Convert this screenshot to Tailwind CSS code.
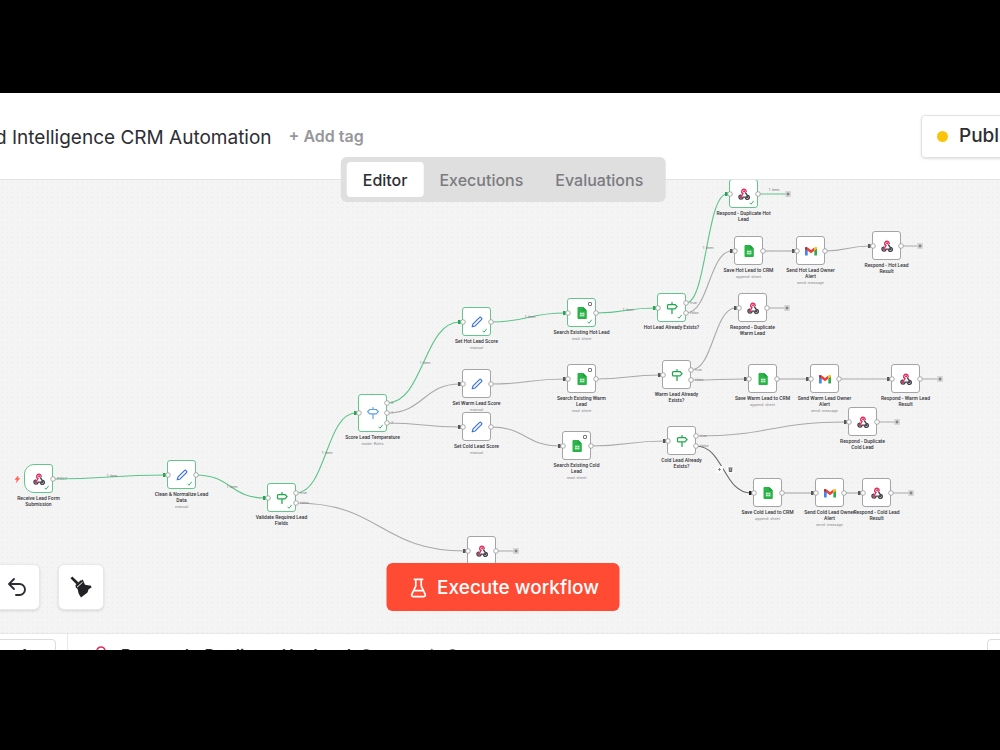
<!DOCTYPE html>
<html lang="en">
<head>
<meta charset="utf-8">
<meta name="viewport" content="width=device-width, initial-scale=1">
<title>Lead Intelligence CRM Automation</title>
<script src="https://cdn.jsdelivr.net/npm/@tailwindcss/browser@4"></script>
</head>
<body class="flex h-screen flex-col overflow-hidden bg-black pt-[93px] pb-[100px] font-['Inter',sans-serif] text-[#2d2e33]">

<!-- icon library -->
<svg class="hidden" aria-hidden="true">
  <symbol id="i-webhook" viewBox="0 0 20 20">
    <g fill="none" stroke-width="2.4" stroke-linecap="round">
      <path d="M12.6 8.2 15.4 12.4A3.3 3.3 0 1 1 12.4 16.5" stroke="#45444d"/>
      <path d="M14.4 15.2H8.4A3.4 3.4 0 1 1 4.2 11.8" stroke="#45444d"/>
      <path d="M5 15 8.2 9.3A3.8 3.8 0 1 1 13.7 5.8" stroke="#e0305f"/>
    </g>
    <circle cx="10.2" cy="5.6" r="1.9" fill="#e0305f"/><circle cx="5" cy="15.2" r="2" fill="#d13562"/><circle cx="15.3" cy="15.2" r="2" fill="#45444d"/>
  </symbol>
  <symbol id="i-pen" viewBox="0 0 20 20">
    <path d="M2 18 3.4 13 14 2.6a1.9 1.9 0 0 1 2.8 0l.7.7a1.9 1.9 0 0 1 0 2.8L7 16.600Z" fill="#f5f8ff" stroke="#3b6fd6" stroke-width="1.9" stroke-linejoin="round"/>
  </symbol>
  <symbol id="i-sign" viewBox="0 0 20 20">
    <path d="M10 1v3M10 11.500V19M4 4.200H15L18.500 7.800 15 11.400H4a1.500 1.500 0 0 1-1.500-1.500V5.700A1.500 1.500 0 0 1 4 4.200Z" fill="none" stroke="currentColor" stroke-width="2.100" stroke-linejoin="round" stroke-linecap="round"/>
  </symbol>
  <symbol id="i-switch" viewBox="0 0 20 20">
    <path d="M10 1v3M10 11.500V19M4.500 4.200H15.500L19 7.800 15.500 11.400H4.500L1 7.800Z" fill="none" stroke="currentColor" stroke-width="1.900" stroke-linejoin="round" stroke-linecap="round"/>
  </symbol>
  <symbol id="i-sheets" viewBox="0 0 20 20">
    <path d="M4 0H12l6 6v12.500a1.500 1.500 0 0 1-1.500 1.500H4A1.500 1.500 0 0 1 2.500 18.500v-17A1.500 1.500 0 0 1 4 0Z" fill="#28b446"/>
    <path d="M12 0l6 6h-6Z" fill="#219b3b"/><rect x="6.500" y="9.500" width="7.500" height="6" fill="#d9f5df"/><path d="M6.500 12.500h7.500M10.200 9.500v6" stroke="#28b446" stroke-width=".8"/>
  </symbol>
  <symbol id="i-gmail" viewBox="0 0 20 20">
    <path d="M0 5v11.700c0 .6.400 1 1 1h3.500V8.500Z" fill="#4285f4"/><path d="M15.500 8.500v9.200H19c.6 0 1-.4 1-1V5Z" fill="#34a853"/>
    <path d="M4.500 4.200v5.300l5.500 4.100 5.500-4.100V4.200L10 8.300Z" fill="#ea4335"/><path d="M0 5v1.200l4.500 3.400V4.200C2.300 2.500 0 3.200 0 5Z" fill="#c5221f"/><path d="M15.500 4.200v5.400L20 6.200V5c0-1.800-2.300-2.500-4.500-.8Z" fill="#fbbc04"/>
  </symbol>
</svg>

<main class="flex min-h-0 flex-1 flex-col bg-white">
  <header class="relative z-20 flex h-[87px] shrink-0 items-center border-b border-[#e3e3e3] bg-white">
    <h1 class="-ml-[5px] pt-[3px] text-[19px] leading-6 whitespace-nowrap">d Intelligence CRM Automation</h1>
    <button class="ml-[17px] text-[16px] leading-6 font-semibold whitespace-nowrap text-[#96979b]">+ Add tag</button>
    <div class="flex-1"></div>
    <button class="-mr-10 flex h-[43px] w-[119px] items-center gap-[11px] rounded border border-[#e2e2e2] pt-px pl-[15px] text-[19px] font-medium shadow-sm">
      <span class="size-[11px] shrink-0 rounded-full bg-[#fcc30b]"></span>Publish
    </button>
    <nav class="absolute top-[64px] left-1/2 ml-[3px] flex -translate-x-1/2 rounded-md bg-[#dfdfdf] px-[6px] py-[5px] text-[16px] font-medium whitespace-nowrap text-[#7b7b80]">
      <button class="h-[35px] rounded bg-white px-4 pt-px text-[#2d2e33]">Editor</button>
      <button class="h-[35px] px-4 pt-px">Executions</button>
      <button class="h-[35px] px-4 pt-px">Evaluations</button>
    </nav>
  </header>

  <section aria-label="Workflow canvas" class="relative min-h-0 flex-1 overflow-hidden bg-[#f4f4f4] bg-[radial-gradient(circle,#e8e8e8_0.7px,transparent_1px)] bg-[length:5px_5px]">
    <svg id="edges" class="absolute inset-0 size-full" fill="none"></svg>
    <div id="nodes"></div>
    <svg id="handles" class="absolute inset-0 size-full font-['Roboto',sans-serif]"></svg>

    <button aria-label="Undo" class="absolute bottom-[23px] -left-[7px] flex h-[46px] w-[47px] items-center justify-center rounded-md border border-[#e8e8e8] bg-white shadow-sm">
      <svg class="size-6" viewBox="0 0 24 24" fill="none" stroke="#2d2e33" stroke-width="1.900" stroke-linecap="round" stroke-linejoin="round"><path d="M9 14 4 9l5-5M4 9h10.500a5.500 5.500 0 0 1 0 11H11"/></svg>
    </button>
    <button aria-label="Tidy up" class="absolute bottom-[23px] left-[58px] flex size-[46px] items-center justify-center rounded-md border border-[#e8e8e8] bg-white shadow-sm">
      <svg class="size-6" viewBox="0 0 24 24" fill="#222226"><path d="M1.500 3.300 3.300 1.500 9.600 7.400 7.600 9.500Z"/><path d="M11.300 6.200 13.700 4.500 16 9.800 22 10.700 22.500 12.500 19.600 14.200 18.500 17.500 12 22.500 9.600 18.500 8.600 14 6.300 12Z"/><path d="M6.800 10.800 12.300 5.800" stroke="#222226" stroke-width="1.600"/><path d="M8 12.200 13.600 7.200" stroke="#fff" stroke-width="1"/></svg>
    </button>
    <button class="absolute bottom-[22px] left-1/2 ml-[3px] flex h-12 w-[233px] -translate-x-1/2 items-center justify-center gap-[10px] rounded-md bg-[#ff4b33] pt-[2px] pl-[2px] text-[19px] font-medium whitespace-nowrap text-white">
      <svg class="h-[20px] w-[18px]" viewBox="0 0 18 22" fill="none" stroke="#fff" stroke-width="1.900" stroke-linejoin="round" stroke-linecap="round"><path d="M4.500 1.500h9M6 1.500V9L1.600 18a1.700 1.700 0 0 0 1.500 2.400h11.800a1.700 1.700 0 0 0 1.500-2.400L12 9V1.500M3.800 14h10.400"/></svg>
      Execute workflow
    </button>
  </section>

  <footer class="flex h-[17px] shrink-0 items-start overflow-hidden border-t border-[#e8e8e8] bg-white">
    <div class="flex h-10 w-[68px] shrink-0 border-r border-[#e8e8e8]"><div class="mt-[5px] -ml-2 h-8 w-[64px] rounded border border-[#dcdcdc] pt-[5px] pl-[28px] text-[15px] leading-5">1</div></div>
    <svg class="mt-[12px] ml-[25px] size-4 shrink-0" viewBox="0 0 16 16" fill="none" stroke="#e0305f" stroke-width="1.700"><circle cx="8" cy="5" r="4"/></svg>
    <p class="mt-[9px] ml-3 text-[16px] leading-6 font-semibold whitespace-nowrap">Respond - Duplicate Hot Lead</p>
    <p class="mt-[9px] ml-[10px] text-[16px] leading-6 whitespace-nowrap text-[#77787d]">Success in 3s</p>
    <div class="flex-1"></div>
    <div class="mt-[5px] -mr-5 h-8 w-[33px] shrink-0 rounded border border-[#dcdcdc]"></div>
  </footer>
</main>

<script>
  // Pan offset of the canvas viewport
  const PAN_Y = -180;
  const GREEN = '#5cc48a', GRAY = '#a9a9ab', DARK = '#69696c';

  // id: centre x, centre y, icon, label, subtitle, succeeded, number of outputs, inputs
  const nodes = {
    receive: [39, 479, 'webhook', 'Receive Lead Form\nSubmission', '', 1, 1, 0],
    clean: [182, 475, 'pen', 'Clean & Normalize Lead\nData', 'manual', 1, 1, 1],
    validate: [282, 498, 'sign', 'Validate Required Lead\nFields', '', 1, 2, 1],
    score: [373, 413, 'switch', 'Score Lead Temperature', 'mode: Rules', 1, 3, 1],
    setHot: [477, 322, 'pen', 'Set Hot Lead Score', 'manual', 1, 1, 1],
    setWarm: [477, 384, 'pen', 'Set Warm Lead Score', 'manual', 0, 1, 1],
    setCold: [477, 427, 'pen', 'Set Cold Lead Score', 'manual', 0, 1, 1],
    findHot: [582, 313, 'sheets', 'Search Existing Hot Lead', 'read: sheet', 1, 1, 1],
    findWarm: [582, 379, 'sheets', 'Search Existing Warm\nLead', 'read: sheet', 0, 1, 1],
    findCold: [577, 446, 'sheets', 'Search Existing Cold\nLead', 'read: sheet', 0, 1, 1],
    ifHot: [672, 308, 'sign', 'Hot Lead Already Exists?', '', 1, 2, 1],
    ifWarm: [677, 375, 'sign', 'Warm Lead Already\nExists?', '', 0, 2, 1],
    ifCold: [682, 441, 'sign', 'Cold Lead Already\nExists?', '', 0, 2, 1],
    dupHot: [744, 194, 'webhook', 'Respond - Duplicate Hot\nLead', '', 1, 1, 1],
    saveHot: [749, 251, 'sheets', 'Save Hot Lead to CRM', 'append: sheet', 0, 1, 1],
    sendHot: [811, 251, 'gmail', 'Send Hot Lead Owner\nAlert', 'send: message', 0, 1, 1],
    resHot: [887, 246, 'webhook', 'Respond - Hot Lead\nResult', '', 0, 1, 1],
    dupWarm: [753, 308, 'webhook', 'Respond - Duplicate\nWarm Lead', '', 0, 1, 1],
    saveWarm: [763, 379, 'sheets', 'Save Warm Lead to CRM', 'append: sheet', 0, 1, 1],
    sendWarm: [825, 379, 'gmail', 'Send Warm Lead Owner\nAlert', 'send: message', 0, 1, 1],
    resWarm: [906, 379, 'webhook', 'Respond - Warm Lead\nResult', '', 0, 1, 1],
    dupCold: [863, 422, 'webhook', 'Respond - Duplicate\nCold Lead', '', 0, 1, 1],
    saveCold: [768, 493, 'sheets', 'Save Cold Lead to CRM', 'append: sheet', 0, 1, 1],
    sendCold: [830, 493, 'gmail', 'Send Cold Lead Owner\nAlert', 'send: message', 0, 1, 1],
    resCold: [877, 493, 'webhook', 'Respond - Cold Lead\nResult', '', 0, 1, 1],
    bad: [482, 551, 'webhook', '', '', 0, 1, 1],
  };
  const edges = [
    ['receive', 0, 'clean', GREEN], ['clean', 0, 'validate', GREEN], ['validate', 0, 'score', GREEN],
    ['validate', 1, 'bad', GRAY], ['score', 0, 'setHot', GREEN], ['score', 1, 'setWarm', GRAY],
    ['score', 2, 'setCold', GRAY], ['setHot', 0, 'findHot', GREEN], ['setWarm', 0, 'findWarm', GRAY],
    ['setCold', 0, 'findCold', GRAY], ['findHot', 0, 'ifHot', GREEN], ['findWarm', 0, 'ifWarm', GRAY],
    ['findCold', 0, 'ifCold', GRAY], ['ifHot', 0, 'dupHot', GREEN], ['ifHot', 1, 'saveHot', GRAY],
    ['saveHot', 0, 'sendHot', GRAY], ['sendHot', 0, 'resHot', GRAY], ['ifWarm', 0, 'dupWarm', GRAY],
    ['ifWarm', 1, 'saveWarm', GRAY], ['saveWarm', 0, 'sendWarm', GRAY], ['sendWarm', 0, 'resWarm', GRAY],
    ['ifCold', 0, 'dupCold', GRAY], ['ifCold', 1, 'saveCold', DARK], ['saveCold', 0, 'sendCold', GRAY],
    ['sendCold', 0, 'resCold', GRAY],
  ];
  const openEnds = [['dupHot', 30], ['resHot', 19], ['dupWarm', 20], ['resWarm', 20], ['dupCold', 20], ['resCold', 20], ['bad', 20]];
  const itemLabels = [[112, 476], [232, 487], [327, 453], [425, 363], [530, 317], [628, 310], [708, 248], [774, 190]];

  const outY = (id, i) => {
    const y = nodes[id][1], n = nodes[id][6];
    return n === 1 ? y : n === 2 ? y - 5 + i * 10 : y - 10 + i * 10;
  };

  let lines = '', overlay = '', html = '';
  for (const [from, i, to, color] of edges) {
    const x1 = nodes[from][0] + 14, y1 = outY(from, i), x2 = nodes[to][0] - 17, y2 = nodes[to][1];
    const c = (x2 - x1) / 2;
    lines += `<path d="M${x1} ${y1}C${x1 + c} ${y1} ${x2 - c} ${y2} ${x2} ${y2}" stroke="${color}" stroke-width="1.1"/>`;
    lines += `<path d="M${x2 - 2} ${y2 - 2}h2l2 2-2 2h-2Z" fill="${color === GREEN ? '#1faa52' : color === DARK ? '#222' : '#58585b'}"/>`;
  }
  for (const [id, len] of openEnds) {
    const x = nodes[id][0] + 14, y = nodes[id][1];
    lines += `<path d="M${x} ${y}h${len - 2}" stroke="${nodes[id][5] ? GREEN : GRAY}"/>`;
    lines += `<rect x="${x + len - 3}" y="${y - 3}" width="6" height="6" rx="1" fill="#d6d6d7"/><path d="M${x + len - 1.5} ${y}h3m-1.5 -1.5v3" stroke="#6b6b6e" stroke-width="1"/>`;
  }
  for (const [id, [x, y, icon, label, sub, ok, outs, ins]] of Object.entries(nodes)) {
    const height = outs === 3 ? 38 : 29;
    const frame = ok ? 'border-[#62c58d]' : 'border-[#a4a4a7]';
    const shape = id === 'receive' ? 'rounded-l-[10px] rounded-r-[3px]' : 'rounded-[3px]';
    const tint = icon === 'switch' ? 'text-[#5b9fe8]' : 'text-[#1fa84b]';
    const check = ok ? '<svg class="absolute right-[3px] bottom-[2px] size-[5px]" viewBox="0 0 10 10" fill="none" stroke="#3bb16b" stroke-width="2"><path d="M1 5.500 4 8.500 9.500 1.500"/></svg>' : '';
    const once = icon === 'sheets' && id.startsWith('find') ? '<span class="absolute top-[3px] right-[3px] size-1 rounded-[1px] border border-[#77777a]"></span>' : '';
    html += `<div class="absolute flex w-[81px] flex-col items-center" style="left:${x - 41}px;top:${y - Math.round(height / 2) + PAN_Y}px">
      <div class="relative flex w-[29px] items-center justify-center border bg-white ${frame} ${shape}" style="height:${height}px"><svg class="size-3 ${tint}"><use href="#i-${icon}"/></svg>${check}${once}</div>
      <p class="mt-[2px] text-center font-['Roboto',sans-serif] text-[5px] leading-[6px] font-medium whitespace-pre text-[#333337]">${label.replace('&', '&amp;')}</p>
      <p class="mt-px text-center font-['Roboto',sans-serif] text-[4px] leading-[6px] whitespace-nowrap text-[#8c8c90]">${sub}</p></div>`;
    const dot = (cx, cy) => `<circle cx="${cx}" cy="${cy}" r="2.3" fill="#fff" stroke="#a2a2a5" stroke-width=".9"/>`;
    if (ins) overlay += dot(x - 14, y);
    for (let i = 0; i < outs; i++) overlay += dot(x + 14, outY(id, i));
    const names = outs === 2 ? ['true', 'false'] : outs === 3 ? ['0', '1', '2'] : id === 'receive' ? ['POST'] : [];
    names.forEach((t, i) => {
      overlay += `<text x="${x + 18}" y="${outY(id, i) + 1}" font-size="4" fill="#85858a">${t}</text>`;
    });
  }
  for (const [x, y] of itemLabels) overlay += `<text x="${x}" y="${y + 1}" font-size="4" text-anchor="middle" fill="#7b7b80">1 item</text>`;
  // trigger bolt and the toolbar of the hovered edge
  overlay += '<path d="M18 476 15 479.500H17L16.300 482.500 19.800 478.300H17.800Z" fill="#ff6150" stroke="#ff6150" stroke-width=".5"/>';
  overlay += '<rect x="716" y="466" width="7" height="7" rx="1" fill="#fbfbfb"/><rect x="727" y="466" width="7" height="7" rx="1" fill="#fbfbfb"/><path d="M718 469.500h3m-1.500-1.500v3" stroke="#77777a" stroke-width=".8"/><path d="M728.500 468h4M729.300 468.500v3h2.400v-3" stroke="#555558" fill="#aaa"/>';

  const shift = s => `<g transform="translate(0 ${PAN_Y})">${s}</g>`;
  document.getElementById('edges').innerHTML = shift(lines);
  document.getElementById('handles').innerHTML = shift(overlay);
  document.getElementById('nodes').innerHTML = html;
</script>
</body>
</html>
